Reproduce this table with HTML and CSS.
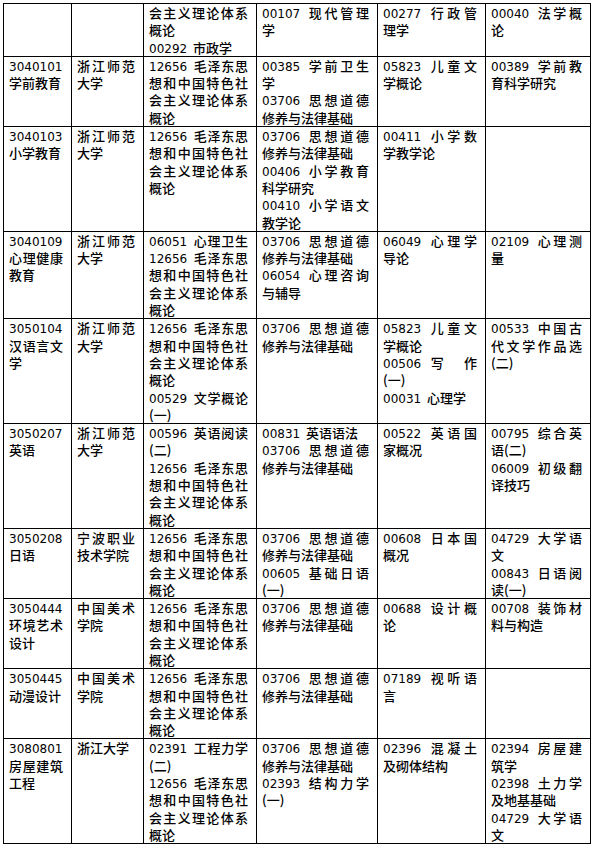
FILE: index.html
```html
<!DOCTYPE html>
<html lang="zh">
<head>
<meta charset="utf-8">
<link rel="stylesheet" href="styles.css">
</head>
<body>
<div class="page">
<table class="plan">
<colgroup><col class="c1"><col class="c2"><col class="c3"><col class="c4"><col class="c5"><col class="c6"></colgroup>
<tbody>
<tr>
<td></td>
<td></td>
<td><div class="j">会主义理论体系</div><div>概论</div><div><span class="n">00292 </span>市政学</div></td>
<td><div class="j"><span class="n">00107 </span>现代管理</div><div>学</div></td>
<td><div class="j"><span class="n">00277 </span>行政管</div><div>理学</div></td>
<td><div class="j"><span class="n">00040 </span>法学概</div><div>论</div></td>
</tr>
<tr>
<td><div><span class="n">3040101</span></div><div>学前教育</div></td>
<td><div class="j">浙江师范</div><div>大学</div></td>
<td><div class="j"><span class="n">12656 </span>毛泽东思</div><div class="j">想和中国特色社</div><div class="j">会主义理论体系</div><div>概论</div></td>
<td><div class="j"><span class="n">00385 </span>学前卫生</div><div>学</div><div class="j"><span class="n">03706 </span>思想道德</div><div>修养与法律基础</div></td>
<td><div class="j"><span class="n">05823 </span>儿童文</div><div>学概论</div></td>
<td><div class="j"><span class="n">00389 </span>学前教</div><div>育科学研究</div></td>
</tr>
<tr>
<td><div><span class="n">3040103</span></div><div>小学教育</div></td>
<td><div class="j">浙江师范</div><div>大学</div></td>
<td><div class="j"><span class="n">12656 </span>毛泽东思</div><div class="j">想和中国特色社</div><div class="j">会主义理论体系</div><div>概论</div></td>
<td><div class="j"><span class="n">03706 </span>思想道德</div><div>修养与法律基础</div><div class="j"><span class="n">00406 </span>小学教育</div><div>科学研究</div><div class="j"><span class="n">00410 </span>小学语文</div><div>教学论</div></td>
<td><div class="j"><span class="n">00411 </span>小学数</div><div>学教学论</div></td>
<td></td>
</tr>
<tr>
<td><div><span class="n">3040109</span></div><div class="j">心理健康</div><div>教育</div></td>
<td><div class="j">浙江师范</div><div>大学</div></td>
<td><div class="j"><span class="n">06051 </span>心理卫生</div><div class="j"><span class="n">12656 </span>毛泽东思</div><div class="j">想和中国特色社</div><div class="j">会主义理论体系</div><div>概论</div></td>
<td><div class="j"><span class="n">03706 </span>思想道德</div><div>修养与法律基础</div><div class="j"><span class="n">06054 </span>心理咨询</div><div>与辅导</div></td>
<td><div class="j"><span class="n">06049 </span>心理学</div><div>导论</div></td>
<td><div class="j"><span class="n">02109 </span>心理测</div><div>量</div></td>
</tr>
<tr>
<td><div><span class="n">3050104</span></div><div class="j">汉语言文</div><div>学</div></td>
<td><div class="j">浙江师范</div><div>大学</div></td>
<td><div class="j"><span class="n">12656 </span>毛泽东思</div><div class="j">想和中国特色社</div><div class="j">会主义理论体系</div><div>概论</div><div class="j"><span class="n">00529 </span>文学概论</div><div>(一)</div></td>
<td><div class="j"><span class="n">03706 </span>思想道德</div><div>修养与法律基础</div></td>
<td><div class="j"><span class="n">05823 </span>儿童文</div><div>学概论</div><div class="j"><span class="n">00506 </span>写&emsp;作</div><div>(一)</div><div><span class="n">00031 </span>心理学</div></td>
<td><div class="j"><span class="n">00533 </span>中国古</div><div class="j">代文学作品选</div><div>(二)</div></td>
</tr>
<tr>
<td><div><span class="n">3050207</span></div><div>英语</div></td>
<td><div class="j">浙江师范</div><div>大学</div></td>
<td><div class="j"><span class="n">00596 </span>英语阅读</div><div>(二)</div><div class="j"><span class="n">12656 </span>毛泽东思</div><div class="j">想和中国特色社</div><div class="j">会主义理论体系</div><div>概论</div></td>
<td><div><span class="n">00831 </span>英语语法</div><div class="j"><span class="n">03706 </span>思想道德</div><div>修养与法律基础</div></td>
<td><div class="j"><span class="n">00522 </span>英语国</div><div>家概况</div></td>
<td><div class="j"><span class="n">00795 </span>综合英</div><div>语(二)</div><div class="j"><span class="n">06009 </span>初级翻</div><div>译技巧</div></td>
</tr>
<tr>
<td><div><span class="n">3050208</span></div><div>日语</div></td>
<td><div class="j">宁波职业</div><div>技术学院</div></td>
<td><div class="j"><span class="n">12656 </span>毛泽东思</div><div class="j">想和中国特色社</div><div class="j">会主义理论体系</div><div>概论</div></td>
<td><div class="j"><span class="n">03706 </span>思想道德</div><div>修养与法律基础</div><div class="j"><span class="n">00605 </span>基础日语</div><div>(一)</div></td>
<td><div class="j"><span class="n">00608 </span>日本国</div><div>概况</div></td>
<td><div class="j"><span class="n">04729 </span>大学语</div><div>文</div><div class="j"><span class="n">00843 </span>日语阅</div><div>读(一)</div></td>
</tr>
<tr>
<td><div><span class="n">3050444</span></div><div class="j">环境艺术</div><div>设计</div></td>
<td><div class="j">中国美术</div><div>学院</div></td>
<td><div class="j"><span class="n">12656 </span>毛泽东思</div><div class="j">想和中国特色社</div><div class="j">会主义理论体系</div><div>概论</div></td>
<td><div class="j"><span class="n">03706 </span>思想道德</div><div>修养与法律基础</div></td>
<td><div class="j"><span class="n">00688 </span>设计概</div><div>论</div></td>
<td><div class="j"><span class="n">00708 </span>装饰材</div><div>料与构造</div></td>
</tr>
<tr>
<td><div><span class="n">3050445</span></div><div>动漫设计</div></td>
<td><div class="j">中国美术</div><div>学院</div></td>
<td><div class="j"><span class="n">12656 </span>毛泽东思</div><div class="j">想和中国特色社</div><div class="j">会主义理论体系</div><div>概论</div></td>
<td><div class="j"><span class="n">03706 </span>思想道德</div><div>修养与法律基础</div></td>
<td><div class="j"><span class="n">07189 </span>视听语</div><div>言</div></td>
<td></td>
</tr>
<tr>
<td><div><span class="n">3080801</span></div><div class="j">房屋建筑</div><div>工程</div></td>
<td><div>浙江大学</div></td>
<td><div class="j"><span class="n">02391 </span>工程力学</div><div>(二)</div><div class="j"><span class="n">12656 </span>毛泽东思</div><div class="j">想和中国特色社</div><div class="j">会主义理论体系</div><div>概论</div></td>
<td><div class="j"><span class="n">03706 </span>思想道德</div><div>修养与法律基础</div><div class="j"><span class="n">02393 </span>结构力学</div><div>(一)</div></td>
<td><div class="j"><span class="n">02396 </span>混凝土</div><div>及砌体结构</div></td>
<td><div class="j"><span class="n">02394 </span>房屋建</div><div>筑学</div><div class="j"><span class="n">02398 </span>土力学</div><div>及地基基础</div><div class="j"><span class="n">04729 </span>大学语</div><div>文</div></td>
</tr>
</tbody>
</table>
</div>
</body>
</html>
```
FILE: styles.css
```css
html, body {
  margin: 0;
  padding: 0;
  background: #fff;
}
.page {
  padding: 3px 0 0 3px;
}
.plan {
  border-collapse: collapse;
  table-layout: fixed;
  width: 588px;
  font-family: "Noto Sans CJK SC", sans-serif;
  font-size: 13px;
  font-weight: 500;
  line-height: 17.3px;
  color: #000;
}
.plan td {
  border: 1px solid #000;
  padding: 0 8px 0 5px;
  vertical-align: top;
  white-space: nowrap;
  overflow: hidden;
}
.c1 { width: 68px; }
.c2 { width: 72px; }
.c3 { width: 113px; }
.c4 { width: 121px; }
.c5 { width: 108px; }
.c6 { width: 105px; }
.n {
  font-family: "DejaVu Sans", "Noto Sans CJK SC", sans-serif;
  font-size: 12px;
  font-weight: 400;
  line-height: 0;
  word-spacing: 2px;
}
.j {
  text-align: justify;
  text-align-last: justify;
}
```
